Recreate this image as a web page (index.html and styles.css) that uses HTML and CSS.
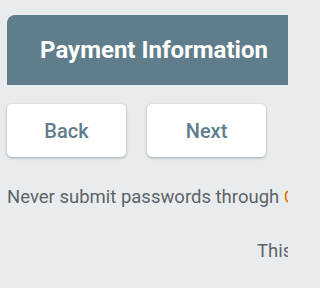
FILE: index.html
```html
<!DOCTYPE html>
<html lang="en">
<head>
<meta charset="utf-8">
<title>Payment Information</title>
<link rel="stylesheet" href="styles.css">
</head>
<body>
<div class="page">
  <header class="form-header">
    <h1 class="form-title">Payment Information</h1>
  </header>
  <div class="nav-row">
    <button class="nav-btn" type="button">Back</button>
    <button class="nav-btn" type="button">Next</button>
  </div>
  <p class="warning">Never submit passwords through <span class="brand">Google Forms.</span></p>
  <p class="disclaimer">This content is neither created nor endorsed by Google.</p>
</div>
</body>
</html>
```

FILE: styles.css
```css
html, body {
  margin: 0;
  padding: 0;
  overflow: hidden;
  background: #e8ecef;
}
body {
  font-family: Roboto, "Liberation Sans", Arial, sans-serif;
  width: 288px;
  height: 288px;
}
.page {
  padding: 15px 0 0 7px;
  width: 281px;
  height: 273px;
  overflow: hidden;
}
.form-header {
  width: 294px;
  height: 70px;
  background: #607d8b;
  border-radius: 8px 8px 0 0;
  display: flex;
  align-items: center;
  justify-content: center;
}
.form-title {
  margin: 0;
  color: #ffffff;
  font-size: 24px;
  font-weight: 700;
  line-height: 1;
}
.nav-row {
  display: flex;
  gap: 21px;
  margin-top: 19px;
}
.nav-btn {
  flex: none;
  width: 119px;
  height: 53px;
  border: none;
  border-radius: 5px;
  background: #ffffff;
  box-shadow: 0 1px 3px rgba(0, 0, 0, 0.3);
  font-family: inherit;
  font-size: 20px;
  font-weight: 500;
  color: #607d8b;
  padding: 0;
}
.warning {
  margin: 30px 0 0;
  font-size: 18.5px;
  line-height: 20px;
  color: #5f6368;
  white-space: nowrap;
}
.brand {
  color: #e37400;
}
.disclaimer {
  margin: 34px 0 0 250px;
  font-size: 18.5px;
  line-height: 20px;
  color: #5f6368;
  white-space: nowrap;
}
```
